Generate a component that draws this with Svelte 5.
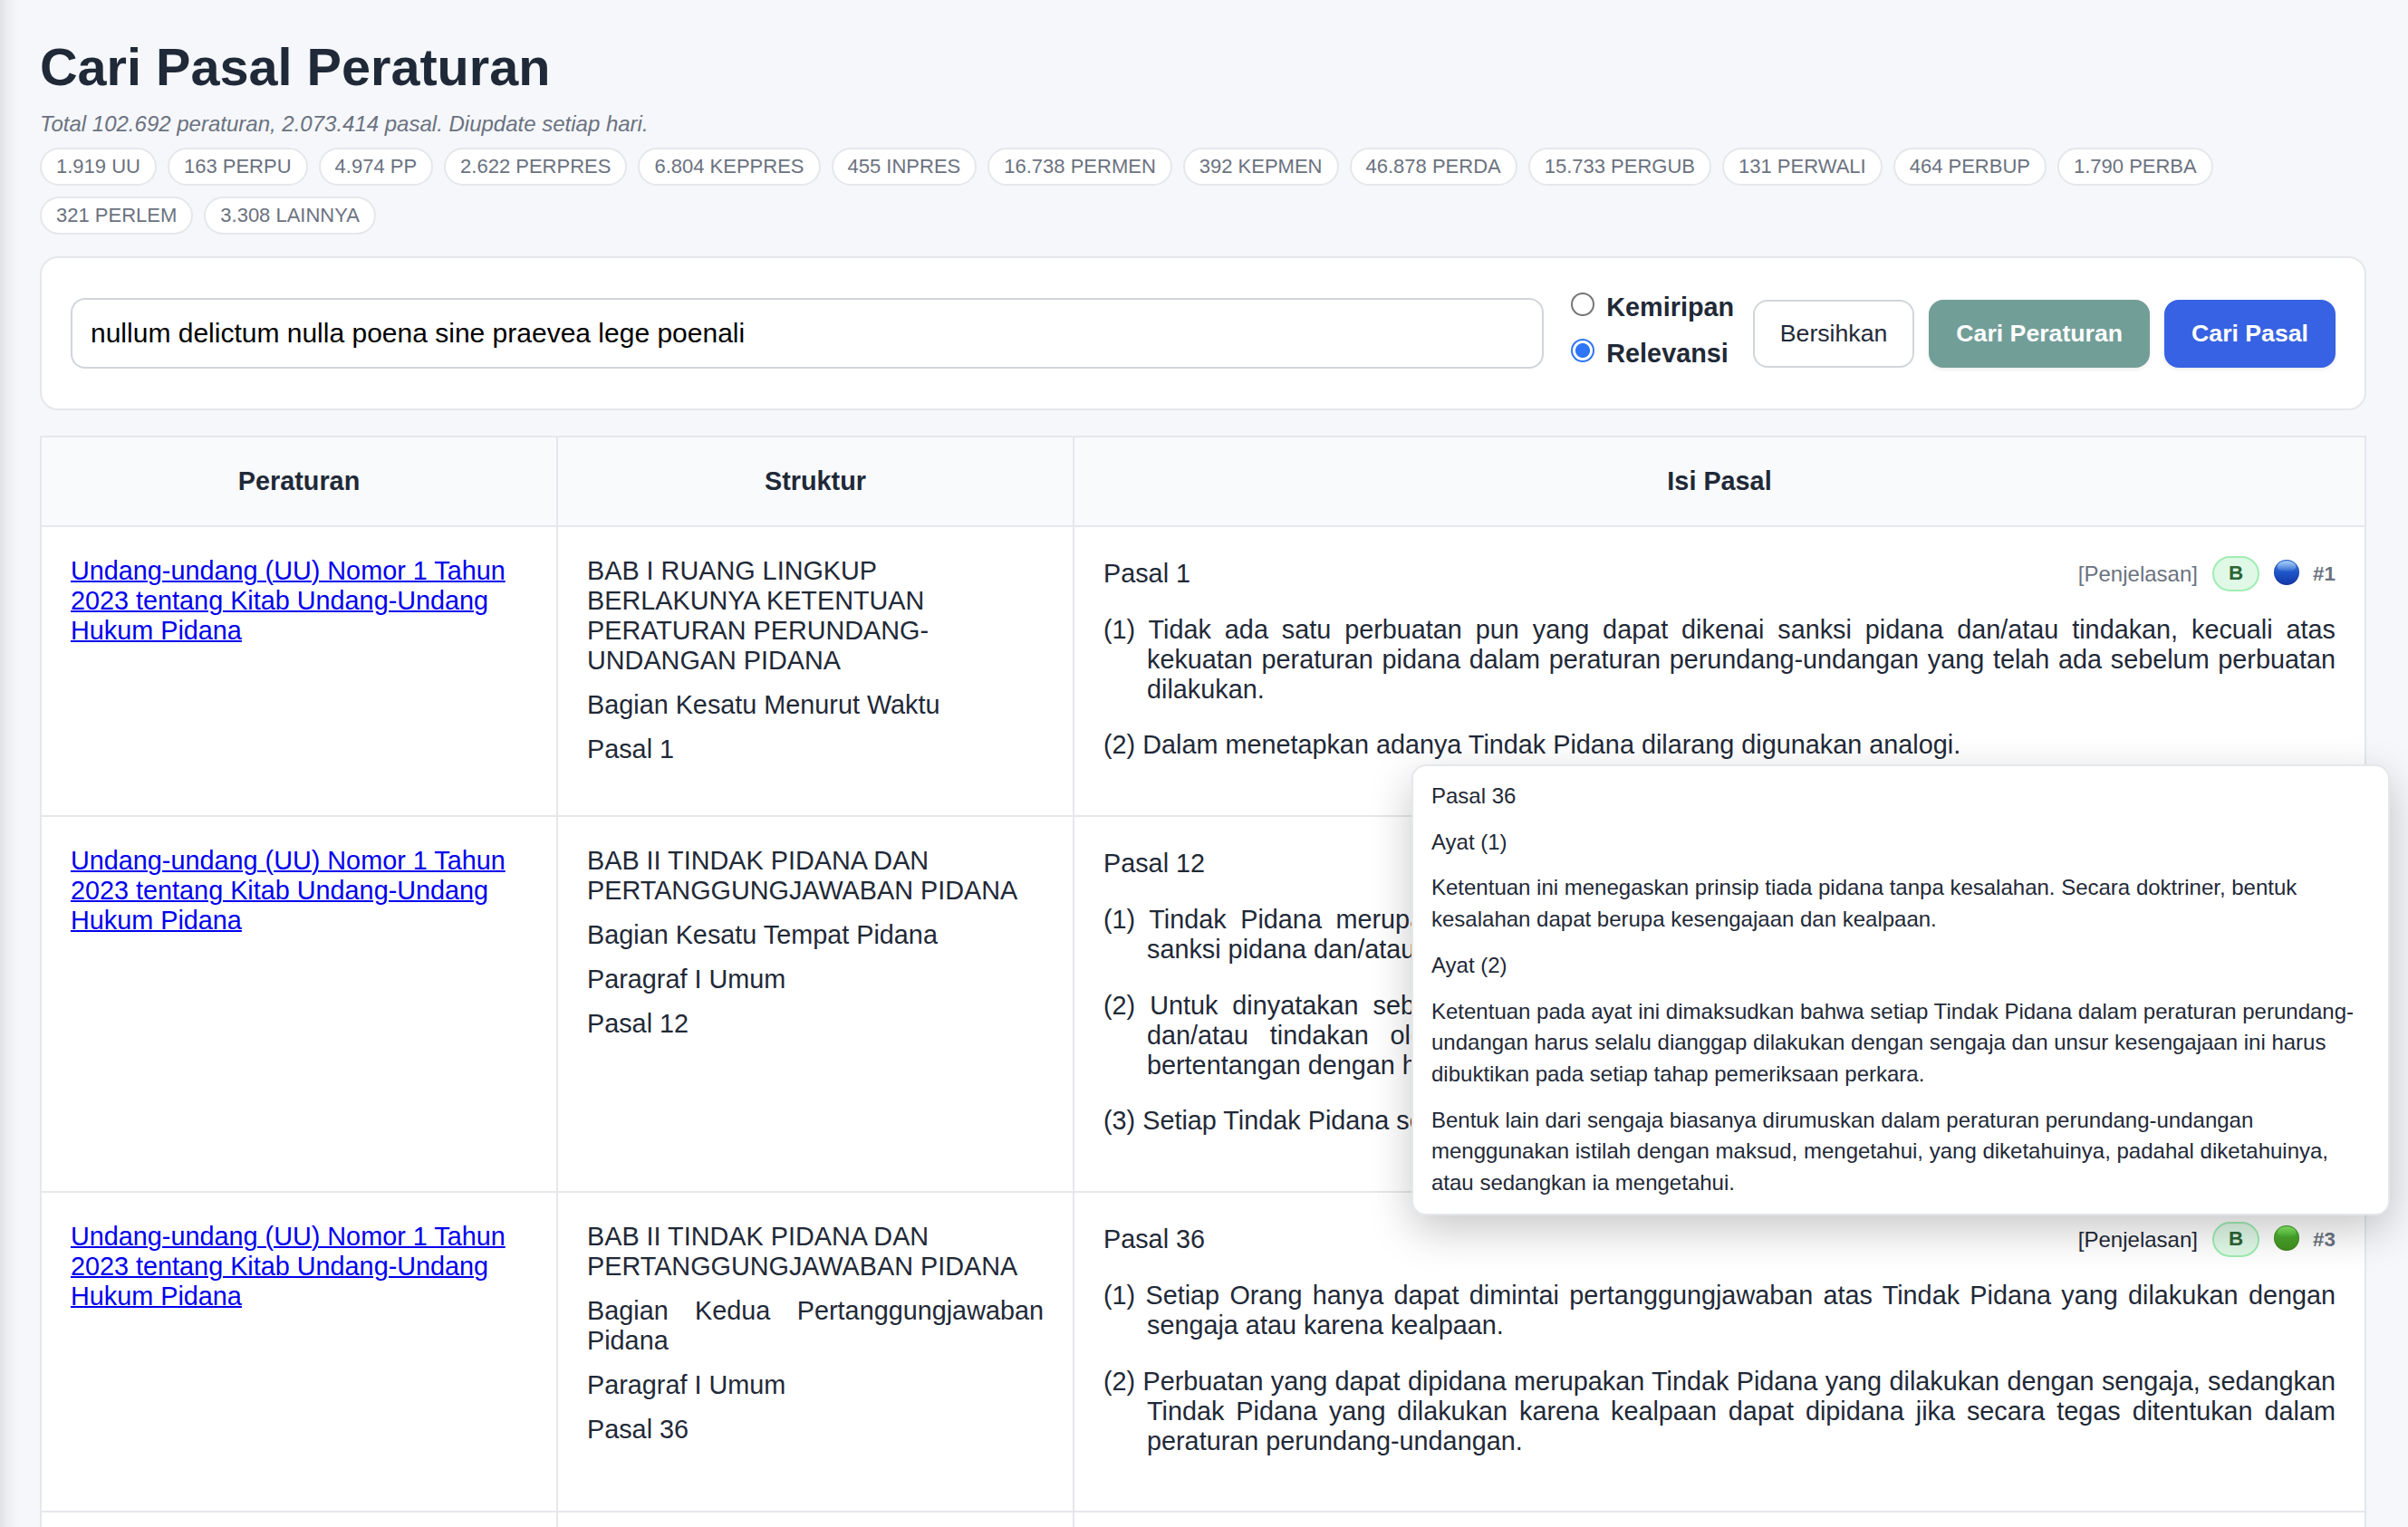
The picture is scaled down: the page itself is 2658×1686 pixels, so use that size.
<script>
  let query = $state('nullum delictum nulla poena sine praevea lege poenali');
  let mode = $state('relevansi');

  const stats = [
    '1.919 UU',
    '163 PERPU',
    '4.974 PP',
    '2.622 PERPRES',
    '6.804 KEPPRES',
    '455 INPRES',
    '16.738 PERMEN',
    '392 KEPMEN',
    '46.878 PERDA',
    '15.733 PERGUB',
    '131 PERWALI',
    '464 PERBUP',
    '1.790 PERBA',
    '321 PERLEM',
    '3.308 LAINNYA',
  ];

  const kuhp = 'Undang-undang (UU) Nomor 1 Tahun 2023 tentang Kitab Undang-Undang Hukum Pidana';

  const results = [
    {
      bab: 'BAB I RUANG LINGKUP BERLAKUNYA KETENTUAN PERATURAN PERUNDANG-UNDANGAN PIDANA',
      struktur: ['Bagian Kesatu Menurut Waktu', 'Pasal 1'],
      pasal: 'Pasal 1',
      dot: 'blue',
      rank: 1,
      ayat: [
        '(1) Tidak ada satu perbuatan pun yang dapat dikenai sanksi pidana dan/atau tindakan, kecuali atas kekuatan peraturan pidana dalam peraturan perundang-undangan yang telah ada sebelum perbuatan dilakukan.',
        '(2) Dalam menetapkan adanya Tindak Pidana dilarang digunakan analogi.',
      ],
    },
    {
      bab: 'BAB II TINDAK PIDANA DAN PERTANGGUNGJAWABAN PIDANA',
      struktur: ['Bagian Kesatu Tempat Pidana', 'Paragraf I Umum', 'Pasal 12'],
      pasal: 'Pasal 12',
      dot: 'green',
      rank: 2,
      ayat: [
        '(1) Tindak Pidana merupakan perbuatan yang oleh peraturan perundang-undangan diancam dengan sanksi pidana dan/atau tindakan.',
        '(2) Untuk dinyatakan sebagai Tindak Pidana, suatu perbuatan yang diancam dengan sanksi pidana dan/atau tindakan oleh peraturan perundang-undangan harus bersifat melawan hukum atau bertentangan dengan hukum yang hidup dalam masyarakat.',
        '(3) Setiap Tindak Pidana selalu bersifat melawan hukum, kecuali ada alasan pembenar.',
      ],
    },
    {
      bab: 'BAB II TINDAK PIDANA DAN PERTANGGUNGJAWABAN PIDANA',
      struktur: ['Bagian Kedua Pertanggungjawaban Pidana', 'Paragraf I Umum', 'Pasal 36'],
      pasal: 'Pasal 36',
      dot: 'green',
      rank: 3,
      open: true,
      ayat: [
        '(1) Setiap Orang hanya dapat dimintai pertanggungjawaban atas Tindak Pidana yang dilakukan dengan sengaja atau karena kealpaan.',
        '(2) Perbuatan yang dapat dipidana merupakan Tindak Pidana yang dilakukan dengan sengaja, sedangkan Tindak Pidana yang dilakukan karena kealpaan dapat dipidana jika secara tegas ditentukan dalam peraturan perundang-undangan.',
      ],
    },
  ];

  const penjelasan = [
    'Pasal 36',
    'Ayat (1)',
    'Ketentuan ini menegaskan prinsip tiada pidana tanpa kesalahan. Secara doktriner, bentuk kesalahan dapat berupa kesengajaan dan kealpaan.',
    'Ayat (2)',
    'Ketentuan pada ayat ini dimaksudkan bahwa setiap Tindak Pidana dalam peraturan perundang-undangan harus selalu dianggap dilakukan dengan sengaja dan unsur kesengajaan ini harus dibuktikan pada setiap tahap pemeriksaan perkara.',
    'Bentuk lain dari sengaja biasanya dirumuskan dalam peraturan perundang-undangan menggunakan istilah dengan maksud, mengetahui, yang diketahuinya, padahal diketahuinya, atau sedangkan ia mengetahui.',
  ];
</script>

<div class="page">
  <h1>Cari Pasal Peraturan</h1>
  <p class="summary">Total 102.692 peraturan, 2.073.414 pasal. Diupdate setiap hari.</p>
  <div class="stats">
    {#each stats as stat}
      <span class="stat">{stat}</span>
    {/each}
  </div>

  <form class="search" onsubmit={(e) => e.preventDefault()}>
    <input class="query" type="text" bind:value={query} aria-label="Kata kunci" />
    <div class="modes">
      <label><input type="radio" value="kemiripan" bind:group={mode} /><span>Kemiripan</span></label>
      <label><input type="radio" value="relevansi" bind:group={mode} /><span>Relevansi</span></label>
    </div>
    <div class="actions">
      <button type="button" class="btn" onclick={() => (query = '')}>Bersihkan</button>
      <button type="button" class="btn btn-teal">Cari Peraturan</button>
      <button type="submit" class="btn btn-blue">Cari Pasal</button>
    </div>
  </form>

  <table>
    <thead>
      <tr>
        <th class="narrow">Peraturan</th>
        <th class="narrow">Struktur</th>
        <th>Isi Pasal</th>
      </tr>
    </thead>
    <tbody>
      {#each results as row}
        <tr>
          <td><a href="#uu">{kuhp}</a></td>
          <td class="struktur">
            <p class="bab">{row.bab}</p>
            {#each row.struktur as line}
              <p>{line}</p>
            {/each}
          </td>
          <td>
            <div class="pasal-head">
              <span>{row.pasal}</span>
              <div class="meta">
                <span class="note" class:open={row.open}>[Penjelasan]</span>
                <span class="badge">B</span>
                <svg class="dot" viewBox="0 0 28 28" aria-hidden="true">
                  <circle cx="14" cy="14" r="14" fill="url(#{row.dot}-edge)" />
                  <circle cx="14" cy="14" r="13" fill="url(#{row.dot}-fill)" />
                  <ellipse cx="14" cy="7.4" rx="10.5" ry="6.2" fill="url(#{row.dot}-shine)" />
                </svg>
                <span class="rank">#{row.rank}</span>
              </div>
            </div>
            {#each row.ayat as ayat}
              <p class="ayat">{ayat}</p>
            {/each}
          </td>
        </tr>
      {/each}
      <tr><td></td><td></td><td></td></tr>
    </tbody>
  </table>

  <div class="popover" role="tooltip">
    {#each penjelasan as text}
      <p>{text}</p>
    {/each}
  </div>

  <svg class="defs" aria-hidden="true">
    <defs>
      <linearGradient id="blue-edge" x2="0" y2="1">
        <stop offset="0" stop-color="#2a5fc0" />
        <stop offset="1" stop-color="#12309a" />
      </linearGradient>
      <linearGradient id="blue-fill" x2="0" y2="1">
        <stop offset="0" stop-color="#4583e0" />
        <stop offset="0.5" stop-color="#1f55c9" />
        <stop offset="1" stop-color="#1338a8" />
      </linearGradient>
      <linearGradient id="blue-shine" x2="0" y2="1">
        <stop offset="0" stop-color="#a6ccf8" />
        <stop offset="1" stop-color="#a6ccf8" stop-opacity="0" />
      </linearGradient>
      <linearGradient id="green-edge" x2="0" y2="1">
        <stop offset="0" stop-color="#3f9a24" />
        <stop offset="1" stop-color="#3a7d1c" />
      </linearGradient>
      <linearGradient id="green-fill" x2="0" y2="1">
        <stop offset="0" stop-color="#5cc93c" />
        <stop offset="0.5" stop-color="#48a52c" />
        <stop offset="1" stop-color="#42901f" />
      </linearGradient>
      <linearGradient id="green-shine" x2="0" y2="1">
        <stop offset="0" stop-color="#8df06c" />
        <stop offset="1" stop-color="#6fdc4c" stop-opacity="0" />
      </linearGradient>
    </defs>
  </svg>
</div>

<style>
  :global(body) {
    margin: 0;
    background: #f5f7fb;
  }

  .page {
    position: relative;
    box-sizing: border-box;
    height: 100vh;
    overflow: hidden;
    padding: 41px 46px 0 44px;
    font-family: 'Liberation Sans', Arial, sans-serif;
    font-size: 28.8px;
    line-height: 33px;
    color: #1f2937;
  }

  /* shadow of the closed drawer on the left */
  .page::before {
    content: '';
    position: absolute;
    top: 0;
    bottom: 0;
    left: 0;
    width: 24px;
    background: linear-gradient(
      to right,
      rgba(0, 0, 0, 0.09),
      rgba(0, 0, 0, 0.045) 30%,
      rgba(0, 0, 0, 0.012) 65%,
      rgba(0, 0, 0, 0)
    );
  }

  h1 {
    margin: 0;
    font-size: 57.6px;
    line-height: 66px;
  }

  .summary {
    margin: 16px 0 12px;
    font-size: 24px;
    line-height: 28px;
    font-style: italic;
    color: #6b7280;
  }

  .stats {
    display: flex;
    flex-wrap: wrap;
    gap: 12px;
    margin-bottom: 24px;
  }

  .stat {
    box-sizing: border-box;
    height: 42px;
    padding: 0 16px;
    border: 2px solid #e5e7eb;
    border-radius: 999px;
    background: #fff;
    font-size: 22px;
    line-height: 37px;
    color: #6b7280;
  }

  .search {
    display: flex;
    align-items: center;
    margin-bottom: 28px;
    padding: 32px;
    border: 2px solid #e5e7eb;
    border-radius: 20px;
    background: #fff;
  }

  .query {
    flex: 1;
    box-sizing: border-box;
    height: 78px;
    padding: 0 20px;
    border: 2px solid #d1d5db;
    border-radius: 16px;
    outline: none;
    background: #fff;
    font-family: inherit;
    font-size: 30px;
    color: #000;
  }

  .modes {
    width: 200.5px;
    margin-left: 30px;
    font-weight: 700;
  }

  .modes label {
    display: flex;
    align-items: flex-start;
    gap: 13px;
    box-sizing: border-box;
    height: 51px;
    padding-top: 6px;
  }

  .modes input {
    appearance: none;
    box-sizing: border-box;
    width: 26px;
    height: 26px;
    margin: 0;
    border: 2px solid #767676;
    border-radius: 50%;
    background: #fff;
  }

  .modes input:checked {
    border-color: #2f76f6;
    background: radial-gradient(circle, #2f76f6 7.6px, #fff 8.4px);
  }

  .actions {
    display: flex;
    gap: 16px;
    margin-top: 1px;
  }

  .btn {
    height: 75px;
    padding: 0 28px;
    border: 2px solid #d1d5db;
    border-radius: 16px;
    background: #fff;
    font-family: inherit;
    font-size: 26.67px;
    color: #1f2937;
  }

  .btn-teal,
  .btn-blue {
    box-shadow: 0 2px 4px rgba(0, 0, 0, 0.08);
    font-weight: 700;
    color: #fff;
  }

  .btn-teal {
    border-color: #729e98;
    background: #729e98;
  }

  .btn-blue {
    border-color: #3762e3;
    background: #3762e3;
  }

  table {
    width: 2568px;
    border-collapse: collapse;
    table-layout: fixed;
    background: #fff;
  }

  th,
  td {
    padding: 32px;
    border: 2px solid #e5e7eb;
    text-align: left;
    vertical-align: top;
  }

  th {
    background: #f9fafc;
    text-align: center;
  }

  .narrow {
    width: 504px;
  }

  td a {
    color: #0000ee;
    text-decoration-thickness: 2px;
  }

  td p {
    margin: 0;
    text-align: justify;
  }

  .struktur p {
    margin-bottom: 16px;
  }

  .struktur .bab {
    text-align: left;
  }

  .pasal-head {
    display: flex;
    align-items: center;
    justify-content: space-between;
    margin-bottom: 26px;
  }

  .meta {
    display: flex;
    align-items: center;
    gap: 16px;
  }

  .note {
    font-size: 24px;
    color: #6b7280;
  }

  .note.open {
    color: #1f2937;
  }

  .badge {
    box-sizing: border-box;
    height: 38.6px;
    padding: 0 16px;
    border: 2px solid #a0edb2;
    border-radius: 999px;
    background: #e0f9e7;
    font-size: 22.4px;
    font-weight: 700;
    line-height: 33px;
    color: #2c6636;
  }

  .dot {
    width: 28px;
    height: 28px;
    margin: -2px -1px 0 0;
  }

  .rank {
    font-size: 22.4px;
    font-weight: 700;
    color: #6b7280;
  }

  .ayat {
    margin-bottom: 28.8px;
    padding-left: 48px;
    text-indent: -48px;
  }

  .popover {
    position: absolute;
    top: 844px;
    left: 1558px;
    box-sizing: border-box;
    width: 1080px;
    padding: 16px 19px 16px 20px;
    border: 2px solid #e5e7eb;
    border-radius: 16px;
    background: #fff;
    box-shadow: 0 16px 48px rgba(0, 0, 0, 0.22);
    font-size: 24px;
    line-height: 34.7px;
  }

  .popover p {
    margin: 0 0 16px;
  }

  .popover p:last-child {
    margin-bottom: 0;
  }

  .defs {
    position: absolute;
    width: 0;
    height: 0;
  }
</style>
